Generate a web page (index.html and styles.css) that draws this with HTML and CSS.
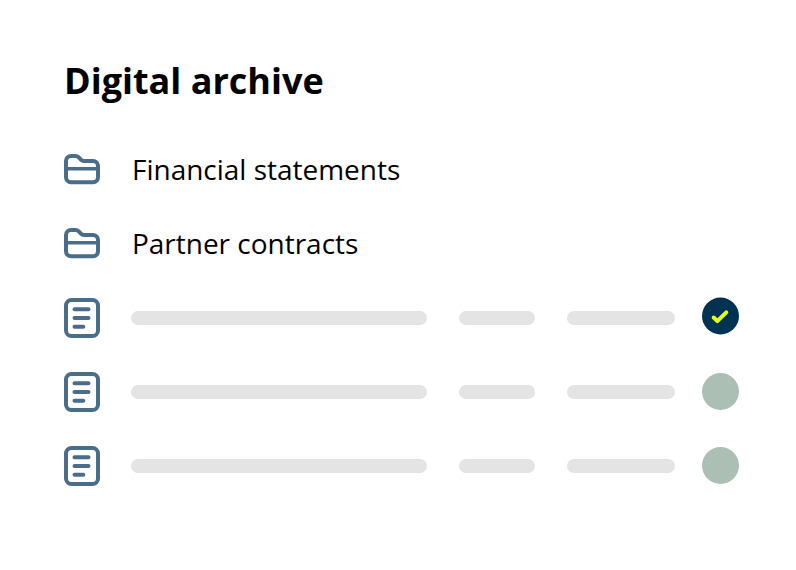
FILE: index.html
```html
<!DOCTYPE html>
<html lang="en">
<head>
<meta charset="utf-8">
<title>Digital archive</title>
<link rel="stylesheet" href="styles.css">
</head>
<body>
<svg class="defs" aria-hidden="true">
  <symbol id="folder" viewBox="0 0 36 32">
    <path d="M2 15V7a5 5 0 0 1 5-5h4.500q1.800 0 3 1.200l2.600 2.700q1.100 1.100 2.800 1.100H29a5 5 0 0 1 5 5v11.300a5 5 0 0 1-5 5H7a5 5 0 0 1-5-5Z"/><path class="divider" d="M2 14.800H34"/>
  </symbol>
  <symbol id="document" viewBox="0 0 36 40">
    <rect x="2" y="2" width="32" height="36" rx="5.500"/>
    <path d="M10.500 11.300H24.500M10.500 20H24.500M10.500 28.700H19.300"/>
  </symbol>
</svg>
<main class="archive">
  <h1 class="title">Digital archive</h1>
  <div class="row"><svg class="icon folder"><use href="#folder"/></svg><span class="name">Financial statements</span></div>
  <div class="row"><svg class="icon folder"><use href="#folder"/></svg><span class="name">Partner contracts</span></div>
  <div class="row"><svg class="icon document"><use href="#document"/></svg><span class="bar long"></span><span class="bar short"></span><span class="bar medium"></span><svg class="done" viewBox="0 0 37 38"><circle cx="18.500" cy="19" r="18.500"/><path d="M11.700 20.500l3.600 3.600 9-8.700"/></svg></div>
  <div class="row"><svg class="icon document"><use href="#document"/></svg><span class="bar long"></span><span class="bar short"></span><span class="bar medium"></span><span class="status"></span></div>
  <div class="row"><svg class="icon document"><use href="#document"/></svg><span class="bar long"></span><span class="bar short"></span><span class="bar medium"></span><span class="status"></span></div>
</main>
</body>
</html>
```
FILE: styles.css
```css
body { margin: 0; background: #fff; color: #000; font-family: "Open Sans", sans-serif; }
.defs { display: none; }
.archive { padding: 56px 57px 0 64px; }
.title { margin: 0 0 27px; font-size: 36px; line-height: 50px; font-weight: 700; }
.row { display: flex; align-items: center; height: 74px; }
.icon { flex: none; width: 36px; fill: none; stroke: #4a6d8a; stroke-width: 4; stroke-linecap: round; stroke-linejoin: round; }
.folder { height: 32px; }
.divider { stroke-width: 3.6; }
.document { height: 40px; margin-right: 31px; }
.name { margin: 0 0 2px 32px; font-size: 27.97px; line-height: 38px; font-weight: 400; }
.bar { height: 14px; border-radius: 7px; background: #e4e4e4; }
.long { width: 296px; margin-right: 32px; }
.short { width: 76px; margin-right: 32px; }
.medium { width: 108px; margin-right: 27px; }
.status { width: 37px; height: 37px; margin-bottom: 1px; border-radius: 50%; background: #abbfb4; }
.done { width: 37px; height: 38px; margin-bottom: 4px; }
.done circle { fill: #003252; }
.done path { fill: none; stroke: #e6ff22; stroke-width: 4; stroke-linecap: round; stroke-linejoin: round; }
```
